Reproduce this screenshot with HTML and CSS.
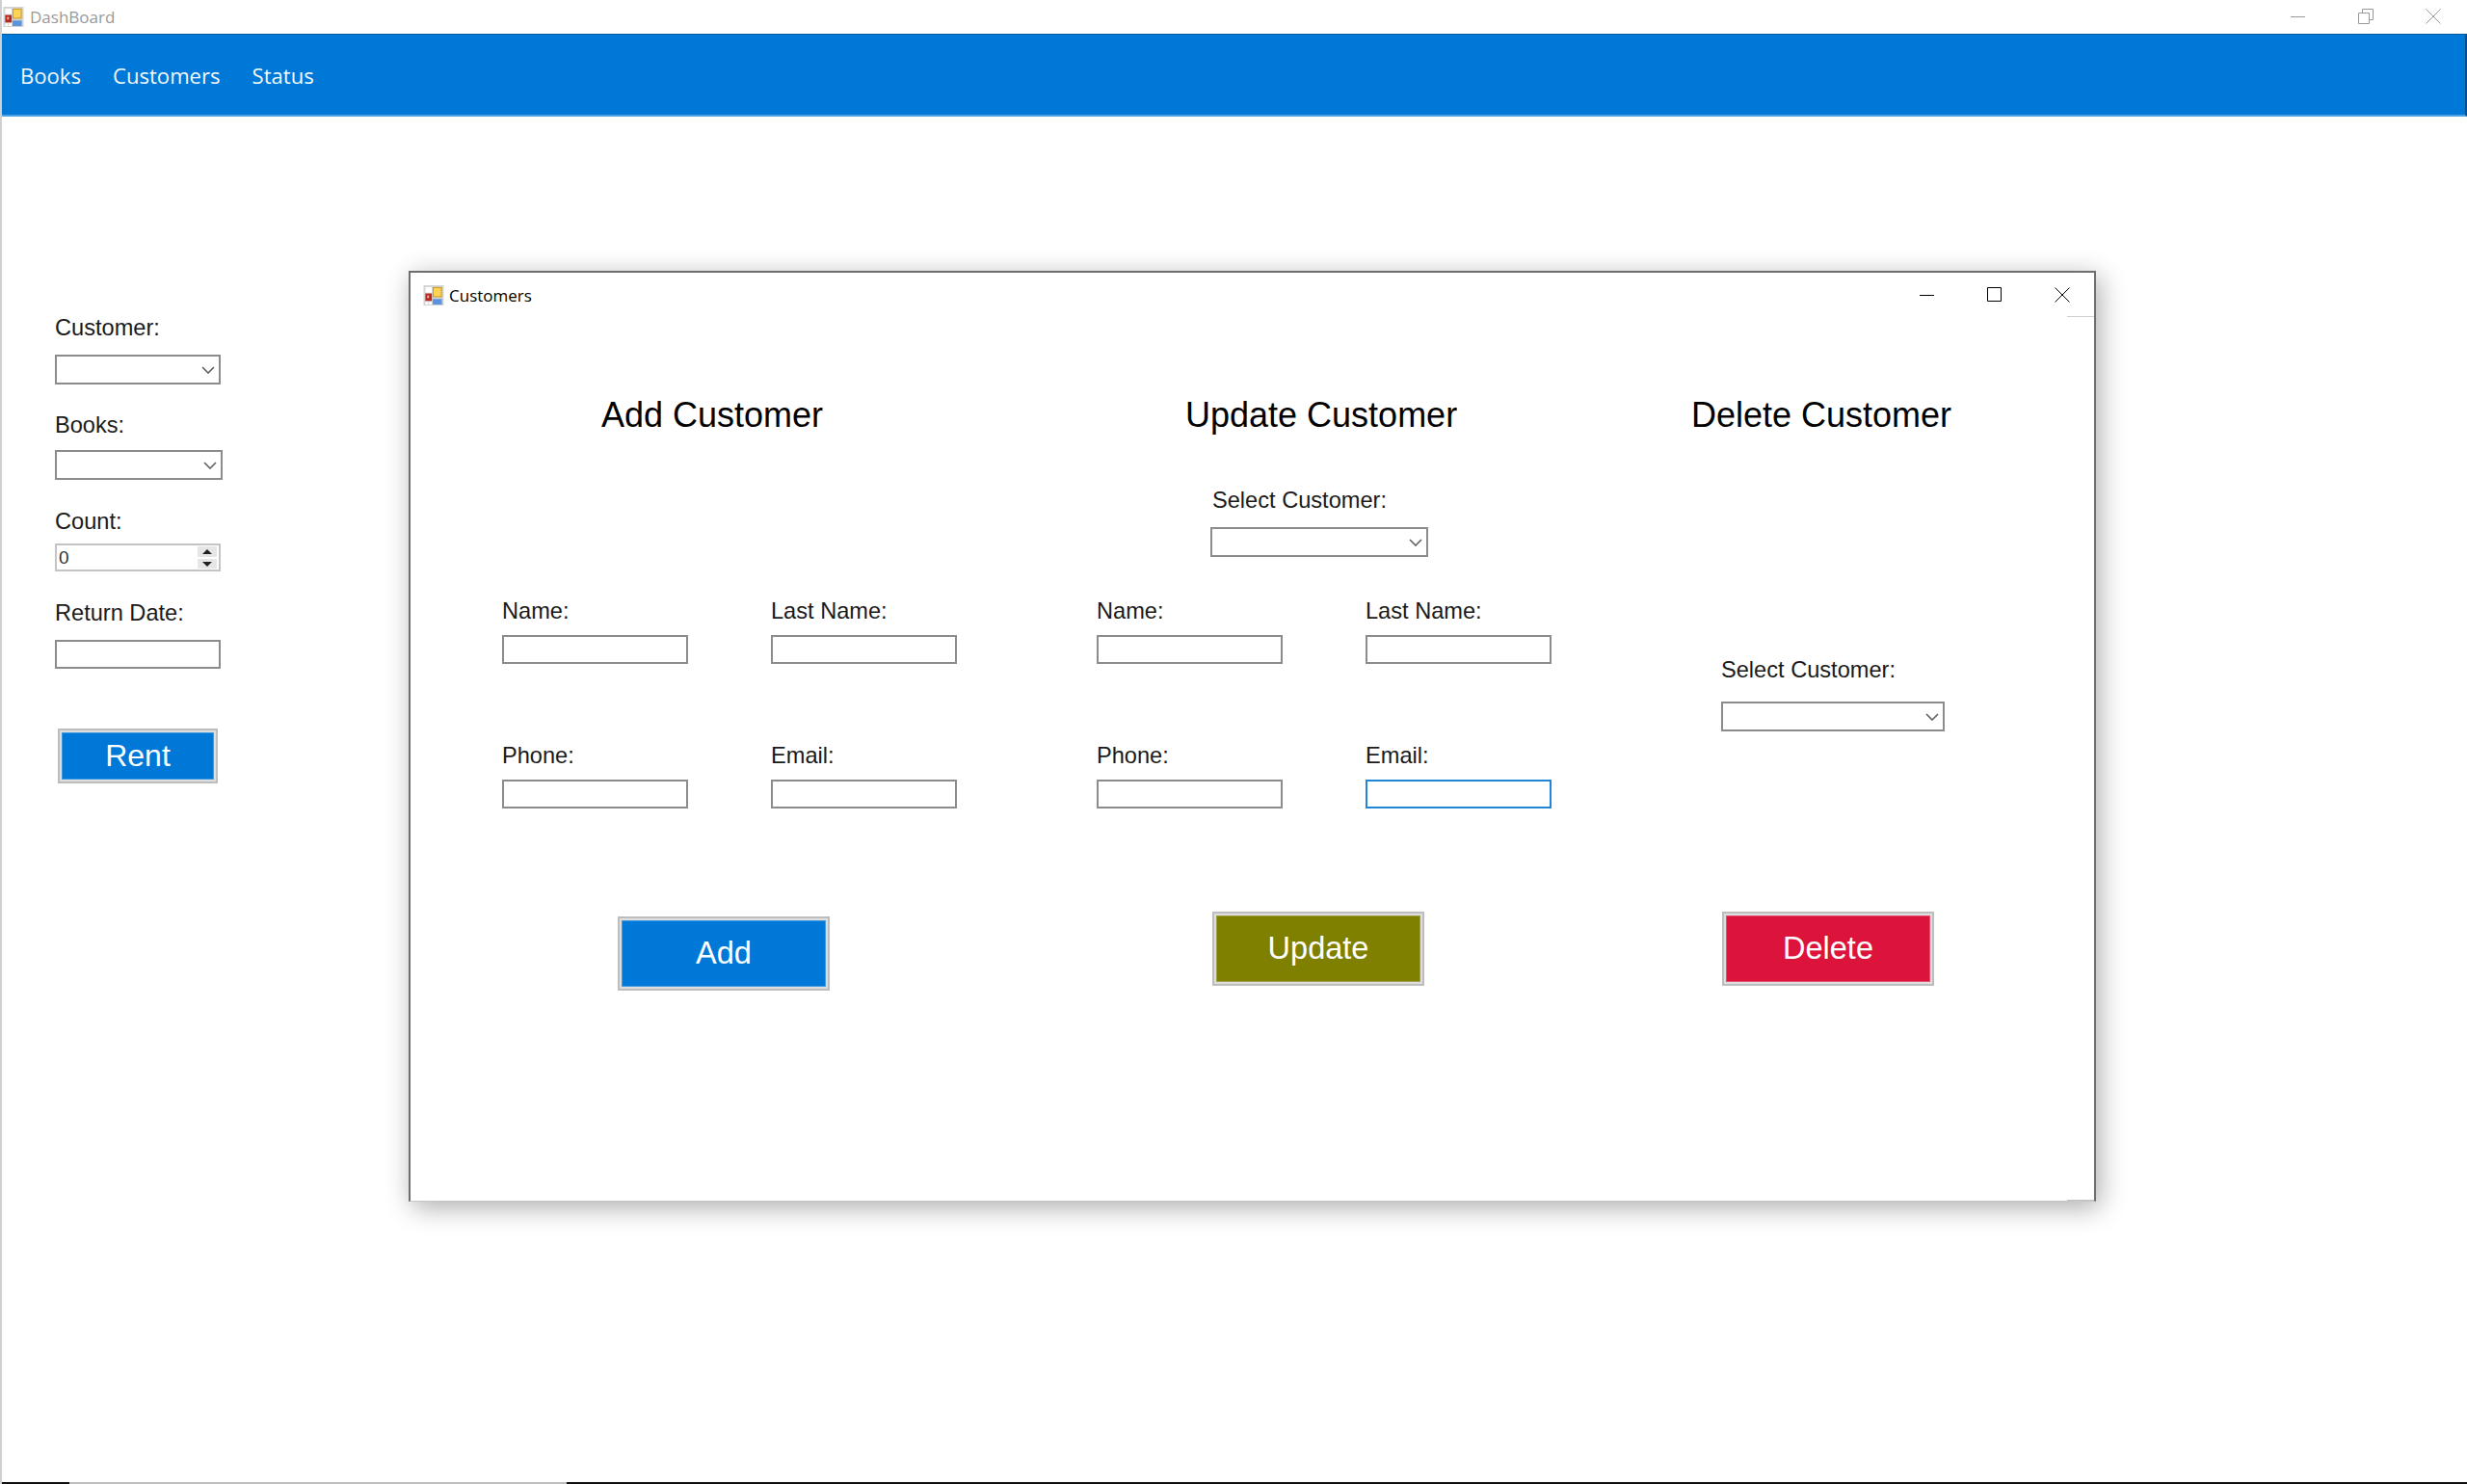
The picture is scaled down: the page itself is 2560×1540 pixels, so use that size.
FILE: index.html
```html
<!DOCTYPE html>
<html lang="en">
<head>
    <meta charset="UTF-8">
    <meta name="viewport" content="width=device-width, initial-scale=1.0">
    <title>DashBoard</title>
    <link rel="stylesheet" href="styles.css">
</head>
<body>
    <svg class="defs" width="0" height="0">
        <symbol id="app-icon" viewBox="0 0 22 22">
            <rect width="22" height="22" fill="#d4d4d4"/>
            <rect x="2" y="2" width="7" height="6" fill="#fff"/>
            <rect x="2" y="9" width="7" height="8" fill="#b8261e"/>
            <rect x="4" y="11" width="2" height="3" fill="#eeb0a0"/>
            <rect x="2" y="18" width="3" height="3" fill="#fff"/>
            <rect x="6" y="18" width="3" height="3" fill="#fff"/>
            <rect x="10" y="2" width="10" height="11" fill="#c79a1c"/>
            <rect x="11" y="3" width="8" height="9" fill="#fcd257"/>
            <rect x="10" y="15" width="10" height="6" fill="#5b93dc"/>
        </symbol>
        <symbol id="chevron" viewBox="0 0 14 8">
            <path d="M1 1l6 6 6-6" fill="none" stroke="#606060" stroke-width="1.6"/>
        </symbol>
    </svg>

    <!-- main window -->
    <header class="titlebar">
        <div class="title">
            <svg class="app-icon"><use href="#app-icon"/></svg>
            <span>DashBoard</span>
        </div>
        <div class="window-btns">
            <svg width="16" height="16" viewBox="0 0 16 16"><path d="M0 8.5h15" stroke="#999" fill="none"/></svg>
            <svg width="16" height="16" viewBox="0 0 16 16"><path d="M.5 4.5h11v11H.5zM4.5 4V.5h11v11H12" stroke="#999" fill="none"/></svg>
            <svg width="16" height="16" viewBox="0 0 16 16"><path d="M.5.5l15 15M15.500.5l-15 15" stroke="#999" fill="none"/></svg>
        </div>
    </header>

    <nav class="menu">
        <a>Books</a>
        <a>Customers</a>
        <a>Status</a>
    </nav>

    <main class="content">
        <div class="rent-panel">
            <label class="rent-customer">Customer:</label>
            <div class="combo"><svg class="chevron"><use href="#chevron"/></svg></div>
            <label class="rent-books">Books:</label>
            <div class="combo combo-wide"><svg class="chevron"><use href="#chevron"/></svg></div>
            <label class="rent-count">Count:</label>
            <div class="spinner">
                <span>0</span>
                <div class="spin-btns">
                    <div class="spin-up"></div>
                    <div class="spin-down"></div>
                </div>
            </div>
            <label class="rent-date">Return Date:</label>
            <input class="field field-rent" type="text">
            <button class="btn btn-rent">Rent</button>
        </div>

        <!-- customers dialog -->
        <section class="dialog">
            <div class="dialog-bar">
                <div class="dialog-title">
                    <svg class="app-icon"><use href="#app-icon"/></svg>
                    <span>Customers</span>
                </div>
                <div class="dialog-btns">
                    <svg width="16" height="16" viewBox="0 0 16 16"><path d="M0 8.500h15" stroke="#000" fill="none"/></svg>
                    <svg width="16" height="16" viewBox="0 0 16 16"><path d="M.5.5h14v14H.5z" stroke="#000" fill="none"/></svg>
                    <svg width="16" height="16" viewBox="0 0 16 16"><path d="M.5.5l15 15M15.500.5l-15 15" stroke="#000" fill="none"/></svg>
                </div>
            </div>
            <div class="corner-top"></div>

            <div class="dialog-cols">
                <div class="col col-add">
                    <h2>Add Customer</h2>
                    <div class="field-grid">
                        <div class="item"><label>Name:</label><input class="field" type="text"></div>
                        <div class="item"><label>Last Name:</label><input class="field" type="text"></div>
                        <div class="item"><label>Phone:</label><input class="field" type="text"></div>
                        <div class="item"><label>Email:</label><input class="field" type="text"></div>
                    </div>
                    <button class="btn btn-add">Add</button>
                </div>

                <div class="col col-update">
                    <h2>Update Customer</h2>
                    <label class="select-label">Select Customer:</label>
                    <div class="combo combo-update"><svg class="chevron"><use href="#chevron"/></svg></div>
                    <div class="field-grid">
                        <div class="item"><label>Name:</label><input class="field" type="text"></div>
                        <div class="item"><label>Last Name:</label><input class="field" type="text"></div>
                        <div class="item"><label>Phone:</label><input class="field" type="text"></div>
                        <div class="item"><label>Email:</label><input class="field field-focus" type="text"></div>
                    </div>
                    <button class="btn btn-update">Update</button>
                </div>

                <div class="col col-delete">
                    <h2>Delete Customer</h2>
                    <label class="delete-label">Select Customer:</label>
                    <div class="combo combo-delete"><svg class="chevron"><use href="#chevron"/></svg></div>
                    <button class="btn btn-delete">Delete</button>
                </div>
            </div>
            <div class="corner-bottom"></div>
        </section>
    </main>

    <footer class="edge">
        <div class="edge-light"></div>
    </footer>
</body>
</html>
```

FILE: styles.css
```css
* {
    box-sizing: border-box;
}

html, body {
    height: 100%;
}

body {
    margin: 0;
    height: 100vh;
    display: flex;
    flex-direction: column;
    overflow: hidden;
    background: #fff;
    color: #1a1a1a;
    font-family: 'Liberation Sans', Arial, sans-serif;
    border-left: 2px solid #d0d0d0;
}

.defs {
    position: absolute;
}

.app-icon {
    width: 22px;
    height: 21px;
    flex: none;
}

/* Title bar */
.titlebar {
    height: 35px;
    flex: none;
    display: flex;
    justify-content: space-between;
    align-items: center;
}

.title {
    display: flex;
    align-items: center;
    gap: 6px;
    padding-left: 1px;
    color: #999;
    font-family: 'Open Sans', sans-serif;
    font-size: 17px;
}

.window-btns {
    display: flex;
    gap: 54px;
    padding-right: 27px;
    margin-bottom: 2px;
}

.menu {
    height: 86px;
    flex: none;
    display: flex;
    align-items: center;
    gap: 33px;
    padding: 1px 0 0 21px;
    margin-left: -2px;
    background: #0078d7;
    border-top: 1px solid #055a9f;
    border-bottom: 2px solid #4ba3e6;
    border-right: 2px solid #04508e;
    color: #f2f8fd;
    font-family: 'Open Sans', sans-serif;
    font-size: 22.1px;
}

.content {
    flex: 1;
    position: relative;
    min-height: 0;
}

/* Left panel */
.rent-panel {
    display: flex;
    flex-direction: column;
    align-items: flex-start;
    padding: 205px 0 0 55px;
}

label {
    display: block;
    font-size: 23.6px;
    line-height: 28px;
}

.combo {
    position: relative;
    width: 172px;
    height: 31px;
    background: #fff;
    border: 2px solid #8c8c8c;
}

.chevron {
    position: absolute;
    right: 4px;
    top: 10px;
    width: 14px;
    height: 8px;
}

.combo-wide {
    width: 174px;
}

.rent-customer {
    margin-bottom: 14px;
}

.rent-books {
    margin: 28px 0 12px;
}

.rent-count {
    margin: 29px 0 9px;
}

.rent-date {
    margin: 29px 0 14px;
}

.spinner {
    width: 172px;
    height: 29px;
    display: flex;
    justify-content: space-between;
    padding: 1px 2px 1px 2px;
    border: 2px solid #c4c4c4;
    font-size: 19px;
    line-height: 24px;
    color: #333;
}

.spin-btns {
    width: 20px;
    display: flex;
    flex-direction: column;
    gap: 2px;
}

.spin-up, .spin-down {
    flex: 1;
    background: #e6e6e6;
    border-left: 5px solid #e6e6e6;
    border-right: 5px solid #e6e6e6;
    position: relative;
}

.spin-up::after, .spin-down::after {
    content: "";
    position: absolute;
    left: 0;
    width: 0;
    height: 0;
    border-left: 5px solid transparent;
    border-right: 5px solid transparent;
}

.spin-up::after {
    top: 3px;
    border-bottom: 5px solid #222;
}

.spin-down::after {
    top: 3px;
    border-top: 5px solid #222;
}

.field {
    display: block;
    width: 193px;
    height: 30px;
    padding: 0;
    background: #fff;
    border: 2px solid #8c8c8c;
    border-radius: 0;
    outline: none;
}

.field-rent {
    width: 172px;
    height: 30px;
}

.field-focus {
    border-color: #1f86dc;
}

.btn {
    display: block;
    width: 220px;
    height: 77px;
    padding: 0;
    border: 2px solid #bdbdbd;
    box-shadow: inset 0 0 0 2px #dedede, inset 0 0 0 3px rgba(255, 255, 255, 0.25);
    color: #fff;
    font-family: 'Liberation Sans', Arial, sans-serif;
    font-size: 32.5px;
}

.btn-rent {
    width: 166px;
    height: 57px;
    margin: 62px 0 0 3px;
    background: #0078d7;
    font-size: 32px;
}

.btn-add {
    background: #0078d7;
    margin: 112px 0 0 120px;
}

.btn-update {
    background: #808000;
    margin: 107px 0 0 120px;
}

.btn-delete {
    background: #dc143c;
    margin: 187px 0 0 32px;
}

/* Customers dialog */
.dialog {
    position: absolute;
    left: 422px;
    top: 160px;
    width: 1751px;
    height: 966px;
    background: #fff;
    border: 2px solid #6e6e6e;
    border-bottom: 1px solid #c8c8c8;
    box-shadow: 4px 6px 26px rgba(0, 0, 0, 0.33);
}

.dialog-bar {
    height: 46px;
    display: flex;
    justify-content: space-between;
    align-items: center;
}

.dialog-title {
    display: flex;
    align-items: center;
    gap: 5px;
    padding-left: 13px;
    color: #000;
    font-family: 'Open Sans', sans-serif;
    font-size: 17px;
}

.dialog-btns {
    display: flex;
    gap: 54px;
    padding-right: 25px;
    margin-top: -1px;
}

.corner-top {
    position: absolute;
    right: 0;
    top: 45px;
    width: 28px;
    height: 1px;
    background: #d0d0d0;
}

.corner-bottom {
    position: absolute;
    right: 0;
    bottom: 0;
    width: 28px;
    height: 1px;
    background: #c0c0c0;
}

.dialog-cols {
    display: grid;
    grid-template-columns: 617px 617px 1fr;
    padding: 0 0 0 95px;
}

.col {
    display: flex;
    flex-direction: column;
    align-items: flex-start;
}

h2 {
    margin: 0;
    font-size: 36px;
    font-weight: 400;
    line-height: 40px;
    color: #000;
}

.col-add h2 {
    margin: 82px 0 0 103px;
}

.col-update h2 {
    margin: 82px 0 0 92px;
}

.col-delete h2 {
    margin: 82px 0 0 0;
}

.col-add .field-grid {
    margin-top: 169px;
}

.field-grid {
    display: grid;
    grid-template-columns: 193px 193px;
    column-gap: 86px;
    row-gap: 81px;
}

.col-update .field-grid {
    margin-top: 42px;
}

.item label {
    margin-bottom: 11px;
}

.select-label {
    margin: 54px 0 0 120px;
}

.combo-update {
    width: 226px;
    margin: 14px 0 0 118px;
}

.delete-label {
    margin: 230px 0 0 31px;
}

.combo-delete {
    width: 232px;
    margin: 19px 0 0 31px;
}

/* Bottom edge */
.edge {
    height: 2px;
    flex: none;
    margin-left: -2px;
    background: #111;
}

.edge-light {
    width: 516px;
    height: 2px;
    margin-left: 72px;
    background: #bdbdbd;
}
```
